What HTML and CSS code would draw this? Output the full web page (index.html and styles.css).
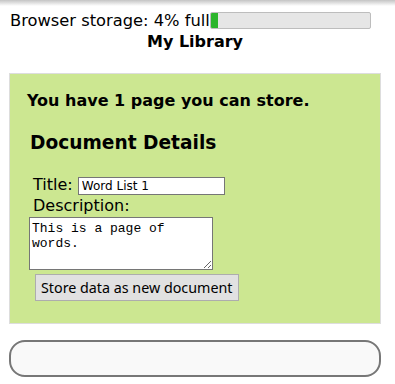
FILE: index.html
```html
<!DOCTYPE html>
<html lang="en">

<head>
    <meta charset="UTF-8">
    <meta name="viewport" content="width=device-width, initial-scale=1.0">
    <title>My Library</title>
    <link rel="stylesheet" href="styles.css">
</head>

<body>
    <div class="topShade"></div>
    <div id="storage">
        <span class="storageLabel">Browser storage: 4% full</span><span class="meter"><span class="meterFill" style="width: 4%;"></span></span>
    </div>
    <h1 id="libraryTitle">My Library</h1>

    <div id="storePanel">
        <p class="pagesLeft">You have 1 page you can store.</p>
        <h2 class="detailsHeading">Document Details</h2>
        <div class="field">
            <label for="docTitle">Title:</label>
            <input type="text" id="docTitle" value="Word List 1">
        </div>
        <div class="field">
            <label for="docDescription">Description:</label>
        </div>
        <textarea id="docDescription">This is a page of words.</textarea>
        <div class="actions">
            <button id="storeButton">Store data as new document</button>
        </div>
    </div>

    <div id="documentList"></div>
</body>

</html>
```

FILE: styles.css
```css
* {
    box-sizing: border-box;
}

body {
    font-family: "DejaVu Sans", Verdana, sans-serif;
    margin: 0;
    padding: 0;
    background-color: #fff;
    color: #000;
}

.topShade {
    height: 6px;
    background: linear-gradient(#c4c4c4, #fff);
}

#storage {
    display: flex;
    align-items: center;
    padding-left: 10px;
    margin-top: 6px;
    height: 17px;
    font-size: 16.3px;
}

.storageLabel {
    white-space: nowrap;
}

.meter {
    display: block;
    width: 161px;
    height: 17px;
    border: 1px solid #bdbdbd;
    border-radius: 2px;
    background-color: #e6e6e6;
    overflow: hidden;
}

.meterFill {
    display: block;
    height: 100%;
    background-color: #2cb52c;
    min-width: 7px;
}

#libraryTitle {
    margin: 3px 5px 0 0;
    font-size: 16px;
    text-align: center;
    line-height: 20px;
}

#storePanel {
    margin: 21px 0 0 9px;
    width: 372px;
    padding: 17px 17px 22px 17px;
    background-color: #cce791;
    border: 1px solid #ddd;
}

.pagesLeft {
    margin: 0;
    font-size: 16px;
    line-height: 20px;
    font-weight: bold;
}

.detailsHeading {
    margin: 20px 0 19px 3px;
    font-size: 18.6px;
    line-height: 24px;
}

.field {
    padding-left: 6px;
    font-size: 16px;
    line-height: 21px;
    height: 21px;
}

#docTitle {
    width: 147px;
    height: 18px;
    padding: 1px 3px;
    border: 1px solid #767676;
    font-family: "DejaVu Sans", Verdana, sans-serif;
    font-size: 12px;
    vertical-align: middle;
}

#docDescription {
    display: block;
    margin: 1px 0 0 2px;
    width: 184px;
    height: 53px;
    padding: 3px 2px;
    border: 1px solid #767676;
    font-family: "Liberation Mono", "Courier New", monospace;
    font-size: 13px;
    resize: both;
}

.actions {
    padding: 4px 0 0 8px;
}

#storeButton {
    height: 27px;
    font-family: "Noto Sans", Tahoma, sans-serif;
    font-size: 14.3px;
    padding: 0 5px;
    background-color: #e1e1e1;
    border: 1px solid #adadad;
    border-radius: 0;
}

#documentList {
    margin: 16px 0 0 9px;
    width: 372px;
    height: 37px;
    border: 2px solid #777;
    border-radius: 16px;
    background-color: #f9f9f9;
}
```
